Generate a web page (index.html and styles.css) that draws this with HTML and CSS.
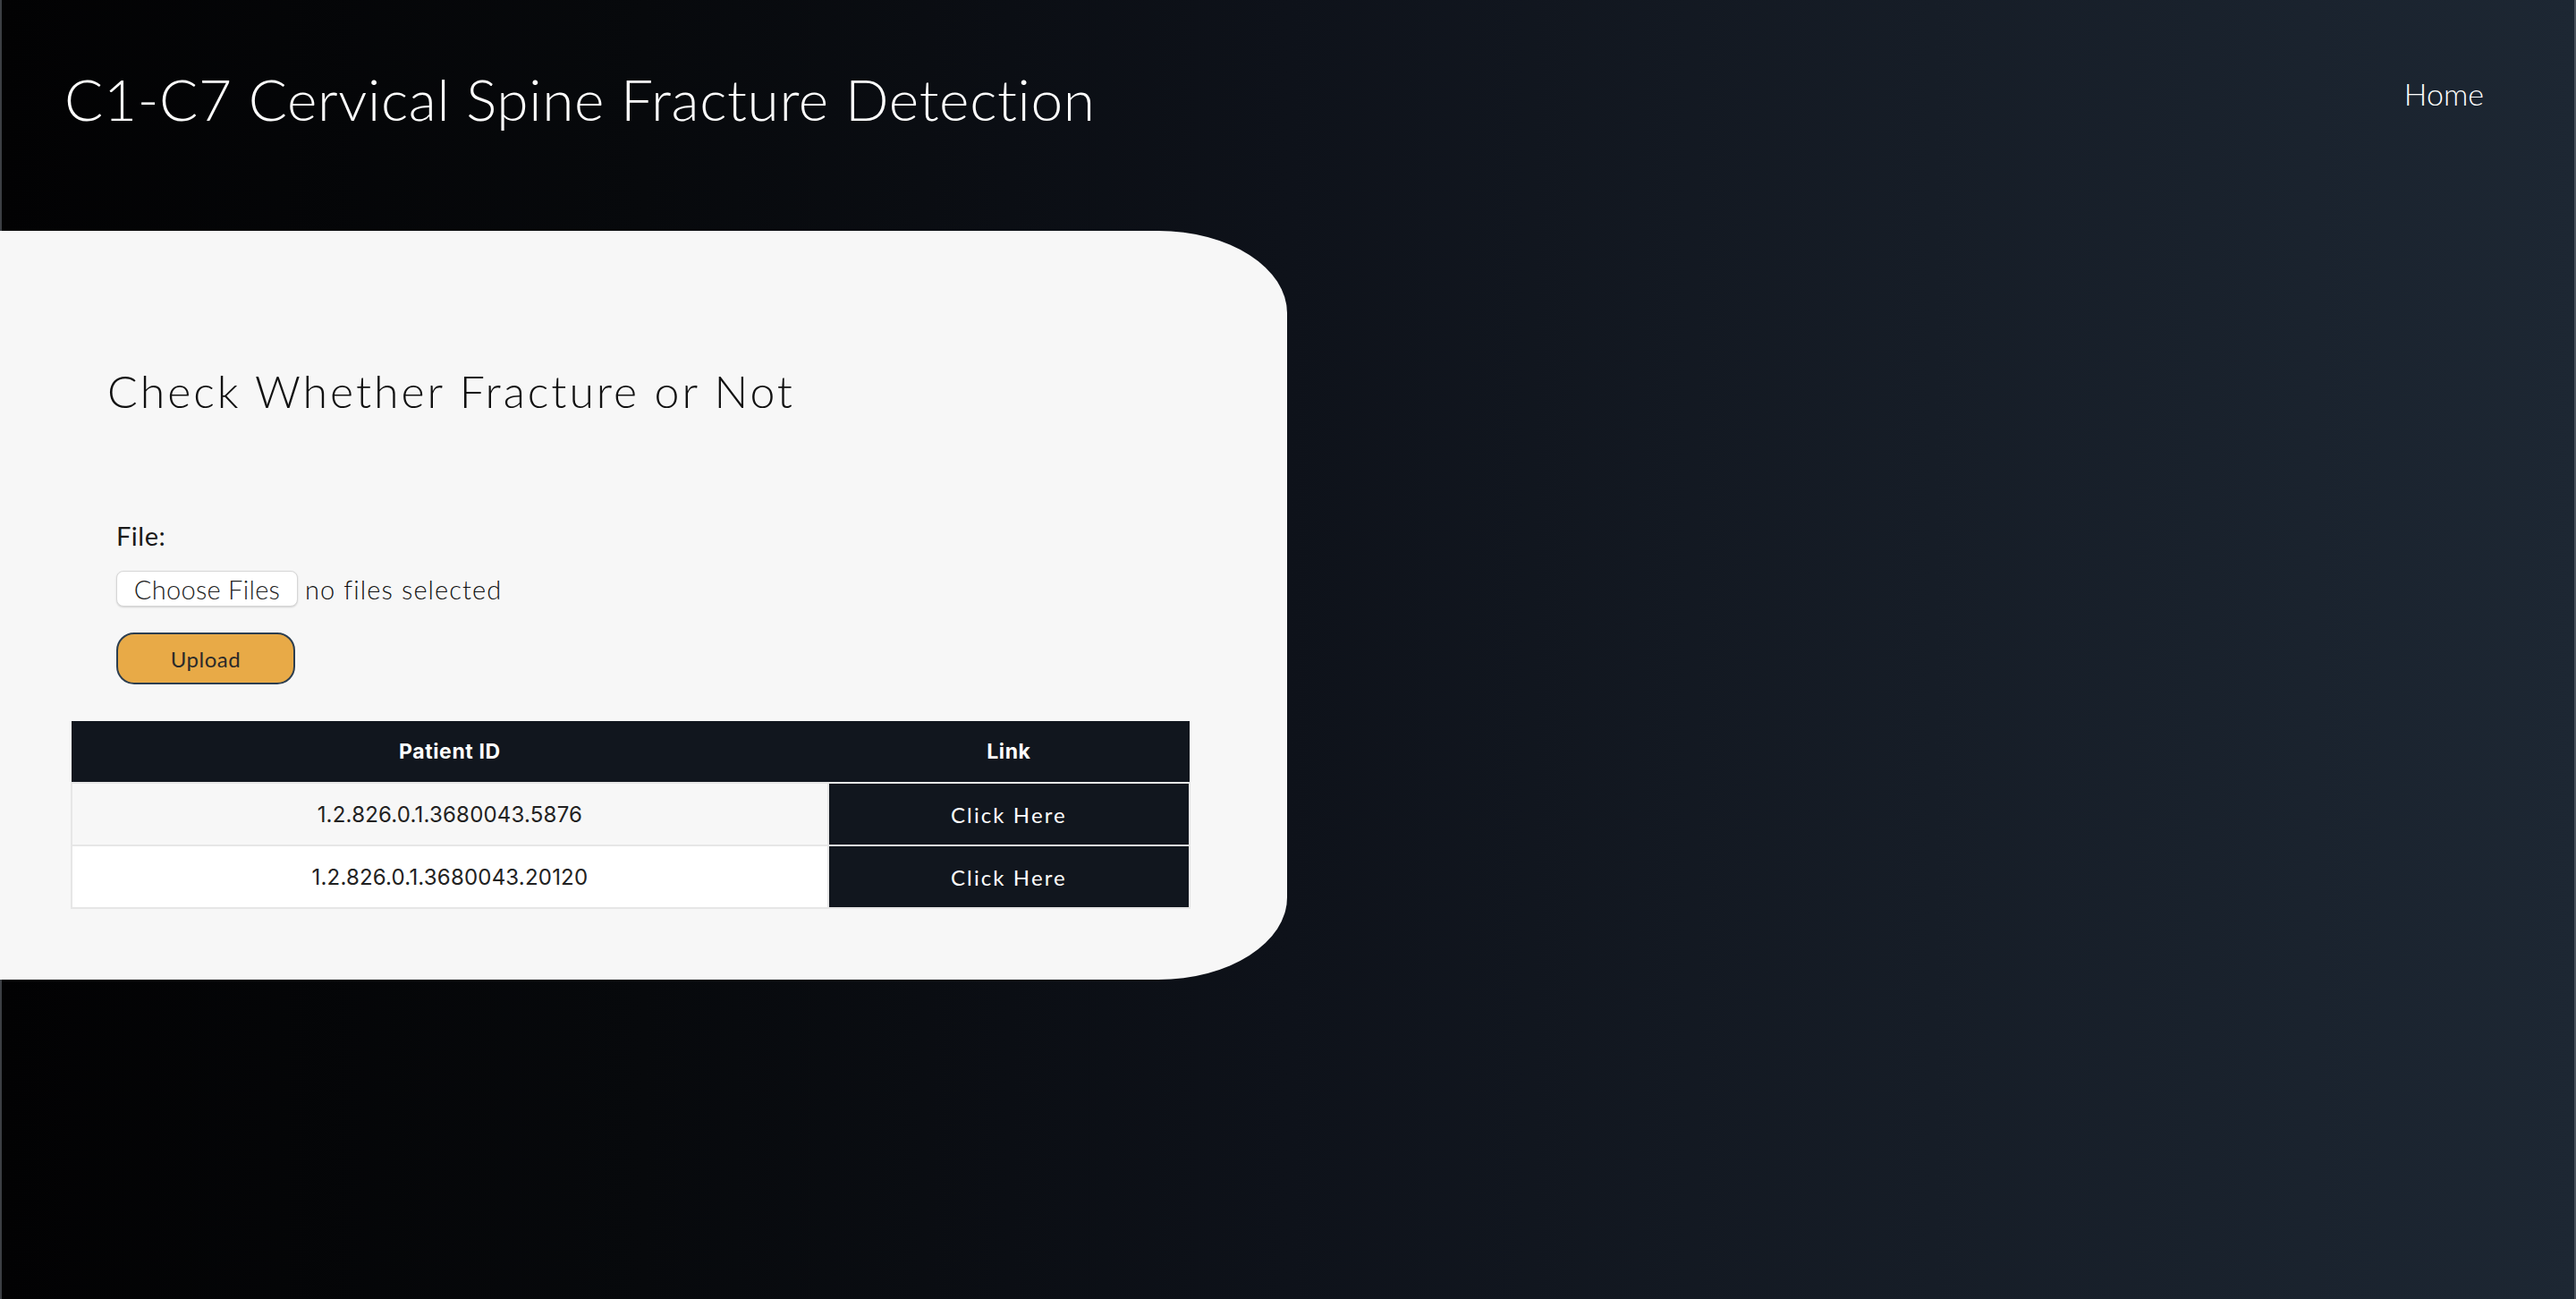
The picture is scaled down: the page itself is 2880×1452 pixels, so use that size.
FILE: index.html
```html
<!DOCTYPE html>
<html lang="en">
<head>
<meta charset="utf-8">
<title>C1-C7 Cervical Spine Fracture Detection</title>
<link rel="stylesheet" href="styles.css">
</head>
<body>
  <header class="topbar">
    <h1 class="brand">C1-C7 Cervical Spine Fracture Detection</h1>
    <nav class="nav"><a class="nav-link" href="#">Home</a></nav>
  </header>
  <main class="card">
    <h2 class="card-title">Check Whether Fracture or Not</h2>
    <form class="upload-form">
      <div class="field-label">File:</div>
      <div class="file-row">
        <span class="file-btn">Choose Files</span>
        <span class="file-status">no files selected</span>
      </div>
      <button type="button" class="upload-btn">Upload</button>
    </form>
    <table class="results">
      <thead>
        <tr><th class="col-id">Patient ID</th><th class="col-link">Link</th></tr>
      </thead>
      <tbody>
        <tr class="row-odd"><td class="cell-id">1.2.826.0.1.3680043.5876</td><td class="cell-link">Click Here</td></tr>
        <tr class="row-even"><td class="cell-id">1.2.826.0.1.3680043.20120</td><td class="cell-link">Click Here</td></tr>
      </tbody>
    </table>
  </main>
</body>
</html>
```
FILE: styles.css
```css
html, body {
  margin: 0;
  padding: 0;
}
body {
  width: 2880px;
  height: 1452px;
  overflow: hidden;
  background: linear-gradient(90deg, #020203 0%, #07090c 25%, #0e121a 50%, #161d27 75%, #1d2733 100%);
  font-family: "Lato", "Noto Sans", sans-serif;
  box-shadow: inset 2px 0 0 #3c3f44, inset -2px 0 0 #4a525c;
}
.topbar {
  height: 220px;
  display: flex;
  align-items: center;
  justify-content: space-between;
  padding: 0 103px 0 72px;
  box-sizing: border-box;
}
.brand {
  margin: 0;
  font-weight: 300;
  font-size: 64px;
  color: #ffffff;
  letter-spacing: 0.65px;
}
.nav-link {
  color: #ffffff;
  text-decoration: none;
  font-size: 34px;
  font-weight: 300;
  position: relative;
  top: -6px;
}
.card {
  margin-top: 38px;
  width: 1439px;
  height: 837px;
  box-sizing: border-box;
  background: #f7f7f7;
  border-radius: 0 144px 144px 0 / 0 92px 92px 0;
  padding: 154px 0 0 80px;
}
.card-title {
  margin: 0 0 0 40px;
  font-size: 50px;
  line-height: 50px;
  font-weight: 300;
  color: #111;
  letter-spacing: 2.95px;
}
.upload-form {
  margin: 122px 0 0 50px;
}
.field-label {
  font-size: 29px;
  line-height: 29px;
  font-weight: 400;
  color: #1a1a1a;
  letter-spacing: 0.5px;
}
.file-row {
  margin-top: 25px;
  display: flex;
  align-items: center;
  gap: 8px;
}
.file-btn {
  display: inline-flex;
  align-items: center;
  justify-content: center;
  width: 203px;
  height: 40px;
  box-sizing: border-box;
  background: #ffffff;
  border: 1px solid #d6d6d6;
  border-radius: 8px;
  box-shadow: 0 1px 2px rgba(0,0,0,0.15);
  font-size: 29px;
  font-weight: 300;
  color: #222;
  letter-spacing: 0.3px;
}
.file-status {
  font-size: 29px;
  font-weight: 300;
  color: #111;
  letter-spacing: 1.1px;
}
.upload-btn {
  margin-top: 29px;
  display: block;
  width: 200px;
  height: 58px;
  background: #e8aa47;
  border: 2px solid #2c3e50;
  border-radius: 20px;
  font-family: "Lato", "Noto Sans", sans-serif;
  font-size: 24px;
  font-weight: 400;
  color: #2a2a2a;
  letter-spacing: 0.5px;
  padding: 0;
}
.results {
  margin-top: 41px;
  margin-left: -1px;
  border-collapse: collapse;
  width: 1252px;
  font-family: "Inter", "Noto Sans", sans-serif;
}
.results th {
  background: #11161e;
  color: #fff;
  font-weight: 700;
  font-size: 23px;
  letter-spacing: 0.6px;
  height: 68px;
  padding: 0;
  text-align: center;
}
.col-id { width: 847px; }
.col-link { width: 405px; }
.results td {
  border: 2px solid #e6e6e6;
  height: 68px;
  padding: 0;
  text-align: center;
  font-size: 24px;
  letter-spacing: 0.2px;
  color: #222;
}
.row-odd td { background: #f7f7f7; }
.row-even td { background: #ffffff; }
.results td.cell-link {
  background: #11161e;
  color: #fff;
  font-family: "Lato", "Noto Sans", sans-serif;
  font-size: 24px;
  letter-spacing: 2.1px;
}
```
